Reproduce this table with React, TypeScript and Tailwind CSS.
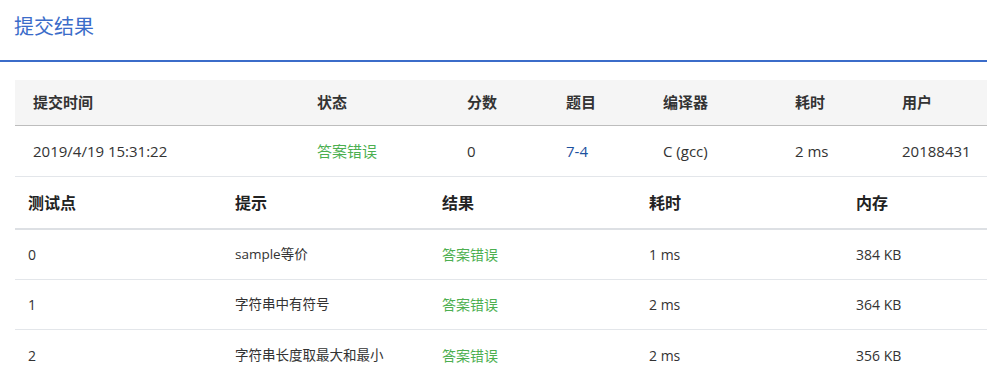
import React from 'react';

const font = { fontFamily: '"Segoe UI", "Open Sans", "Noto Sans CJK SC", sans-serif' };

const summaryCols = [
  { label: '提交时间', w: 'w-[284px]' },
  { label: '状态', w: 'w-[150px]' },
  { label: '分数', w: 'w-[99px]' },
  { label: '题目', w: 'w-[97px]' },
  { label: '编译器', w: 'w-[132px]' },
  { label: '耗时', w: 'w-[107px]' },
  { label: '用户', w: 'flex-1' },
];

const caseCols = ['测试点', '提示', '结果', '耗时', '内存'];

const cases = [
  { id: '0', hint: 'sample等价', time: '1 ms', mem: '384 KB' },
  { id: '1', hint: '字符串中有符号', time: '2 ms', mem: '364 KB' },
  { id: '2', hint: '字符串长度取最大和最小', time: '2 ms', mem: '356 KB' },
];

const App: React.FC = () => {
  return (
    <div className="w-[987px] h-[367px] bg-white overflow-hidden text-[#333]" style={font}>
      {/* Title */}
      <div className="h-[62px] border-b-2 border-[#3b6cc9] pl-[14px] pt-[13px]">
        <h1 className="text-[20px] leading-[28px] text-[#3b6cc9]">提交结果</h1>
      </div>

      <div className="ml-[15px] mt-[18px]">
        {/* Summary table */}
        <div className="flex h-[46px] items-center bg-[#f5f5f5] border-b border-[#bdbdbd]">
          {summaryCols.map((c) => (
            <div key={c.label} className={`${c.w} pl-[18px] text-[15px] font-bold text-[#333]`}>
              {c.label}
            </div>
          ))}
        </div>
        <div className="flex h-[51px] items-center border-b border-[#e3e6ea] text-[15px]">
          <div className="w-[284px] pl-[18px]">2019/4/19 15:31:22</div>
          <div className="w-[150px] pl-[18px] text-[#4caf50]">答案错误</div>
          <div className="w-[99px] pl-[18px]">0</div>
          <div className="w-[97px] pl-[18px] text-[#1d519e]">7-4</div>
          <div className="w-[132px] pl-[18px]">C (gcc)</div>
          <div className="w-[107px] pl-[18px]">2 ms</div>
          <div className="flex-1 pl-[18px]">20188431</div>
        </div>

        {/* Test cases table */}
        <div className="flex h-[53px] items-center border-b-2 border-[#dde0e4]">
          {caseCols.map((label, i) => (
            <div
              key={label}
              className={`${i < 4 ? 'w-[207px]' : 'flex-1'} pl-[13px] text-[16px] font-bold text-[#222]`}
            >
              {label}
            </div>
          ))}
        </div>
        {cases.map((r, i) => (
          <div
            key={r.id}
            className={`flex h-[50px] items-center text-[14px] ${i < cases.length - 1 ? 'border-b border-[#e3e6ea]' : ''}`}
          >
            <div className="w-[207px] pl-[13px]">{r.id}</div>
            <div className="w-[207px] pl-[13px] text-[13.5px]">{r.hint}</div>
            <div className="w-[207px] pl-[13px] text-[#4caf50]">答案错误</div>
            <div className="w-[207px] pl-[13px]">{r.time}</div>
            <div className="flex-1 pl-[13px]">{r.mem}</div>
          </div>
        ))}
      </div>
    </div>
  );
};

export default App;
